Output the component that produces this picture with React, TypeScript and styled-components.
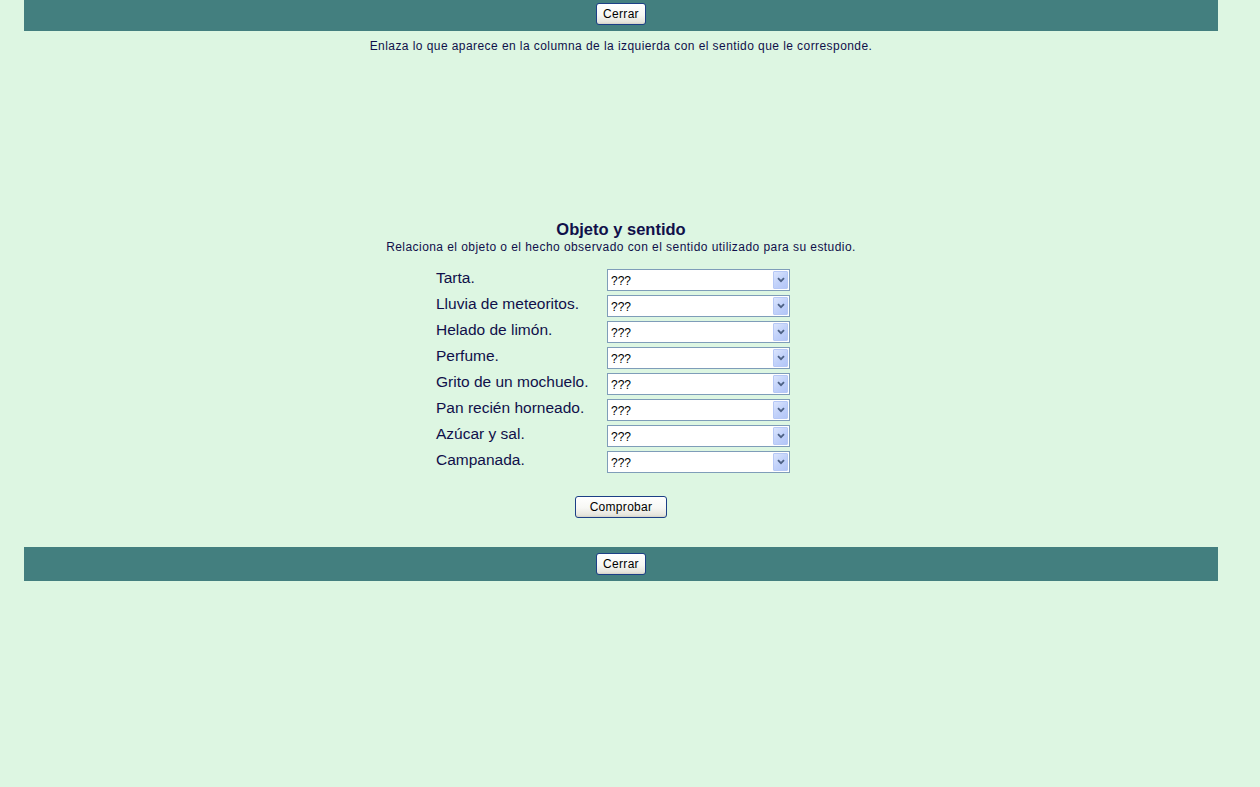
import React from "react";
import styled, { createGlobalStyle } from "styled-components";

const Global = createGlobalStyle`
  html, body { margin: 0; padding: 0; background: #ddf6e2; }
  body { font-family: "Liberation Sans", Arial, sans-serif; color: #0c0c3c; }
`;

const Page = styled.div`
  width: 1194px;
  margin-left: 24px;
  display: flex;
  flex-direction: column;
  align-items: stretch;
  min-height: 787px;
`;

const Bar = styled.div<{ $h: number; $pt: number }>`
  height: ${(p) => p.$h}px;
  box-sizing: border-box;
  padding-top: ${(p) => p.$pt}px;
  background: #437f7f;
  display: flex;
  justify-content: center;
  align-items: flex-start;
`;

const XPButton = styled.button<{ $w: number }>`
  width: ${(p) => p.$w}px;
  height: 22px;
  padding: 0;
  border: 1px solid #1c3f86;
  border-radius: 3px;
  background: linear-gradient(#ffffff 0%, #f7f7f4 55%, #e6e5dd 90%, #d6d4c8 100%);
  box-shadow: inset 0 -1px 0 #d8d6cb;
  font-family: "Liberation Sans", Arial, sans-serif;
  font-size: 12px;
  color: #000;
  letter-spacing: 0.3px;
  cursor: pointer;
`;

const Instr = styled.p`
  margin: 8px 0 0;
  text-align: center;
  font-size: 12px;
  line-height: 14px;
  letter-spacing: 0.43px;
  color: #10104a;
`;

const Title = styled.h2`
  margin: 167px 0 0;
  text-align: center;
  font-size: 16.5px;
  line-height: 19px;
  font-weight: bold;
  color: #10104a;
`;

const Sub = styled.p`
  margin: 0;
  text-align: center;
  font-size: 12px;
  line-height: 16px;
  letter-spacing: 0.44px;
  color: #10104a;
`;

const Grid = styled.div`
  margin-top: 14px;
  align-self: center;
  padding-right: 16px;
  display: grid;
  grid-template-columns: 171px 183px;
  row-gap: 4px;
`;

const Label = styled.div`
  font-size: 15.5px;
  line-height: 22px;
  height: 22px;
  margin-top: -2px;
  color: #10104a;
`;

const SelectWrap = styled.div`
  position: relative;
  width: 183px;
  height: 22px;
`;

const Select = styled.select`
  appearance: none;
  -webkit-appearance: none;
  width: 100%;
  height: 100%;
  box-sizing: border-box;
  border: 1px solid #7f9db9;
  background: #fff;
  border-radius: 0;
  padding: 2px 0 0 3px;
  font-family: "Liberation Sans", Arial, sans-serif;
  font-size: 12px;
  color: #000;
  outline: none;
`;

const Arrow = styled.span`
  position: absolute;
  top: 2px;
  right: 2px;
  width: 15px;
  height: 18px;
  box-sizing: border-box;
  border: 1px solid #b6c8f6;
  border-radius: 1px;
  background: linear-gradient(135deg, #dbe5fd 0%, #c2d2fa 50%, #b2c5f7 100%);
  display: flex;
  align-items: center;
  justify-content: center;
  pointer-events: none;
`;

const CheckRow = styled.div`
  margin-top: 23px;
  display: flex;
  justify-content: center;
`;

const BottomBar = styled(Bar)`
  margin-top: 29px;
`;

const items = [
  "Tarta.",
  "Lluvia de meteoritos.",
  "Helado de limón.",
  "Perfume.",
  "Grito de un mochuelo.",
  "Pan recién horneado.",
  "Azúcar y sal.",
  "Campanada.",
];

const options = ["???", "Vista", "Oído", "Olfato", "Gusto", "Tacto"];

export default function App() {
  return (
    <>
      <Global />
      <Page>
        <Bar $h={31} $pt={3}>
          <XPButton $w={50}>Cerrar</XPButton>
        </Bar>
        <Instr>Enlaza lo que aparece en la columna de la izquierda con el sentido que le corresponde.</Instr>
        <Title>Objeto y sentido</Title>
        <Sub>Relaciona el objeto o el hecho observado con el sentido utilizado para su estudio.</Sub>
        <Grid>
          {items.map((it) => (
            <React.Fragment key={it}>
              <Label>{it}</Label>
              <SelectWrap>
                <Select defaultValue="???">
                  {options.map((o) => (
                    <option key={o} value={o}>
                      {o}
                    </option>
                  ))}
                </Select>
                <Arrow>
                  <svg width="8" height="6" viewBox="0 0 8 6">
                    <path d="M1 1.2 L4 4.2 L7 1.2" fill="none" stroke="#4d6185" strokeWidth="1.8" />
                  </svg>
                </Arrow>
              </SelectWrap>
            </React.Fragment>
          ))}
        </Grid>
        <CheckRow>
          <XPButton $w={92}>Comprobar</XPButton>
        </CheckRow>
        <BottomBar $h={34} $pt={6}>
          <XPButton $w={50}>Cerrar</XPButton>
        </BottomBar>
      </Page>
    </>
  );
}
